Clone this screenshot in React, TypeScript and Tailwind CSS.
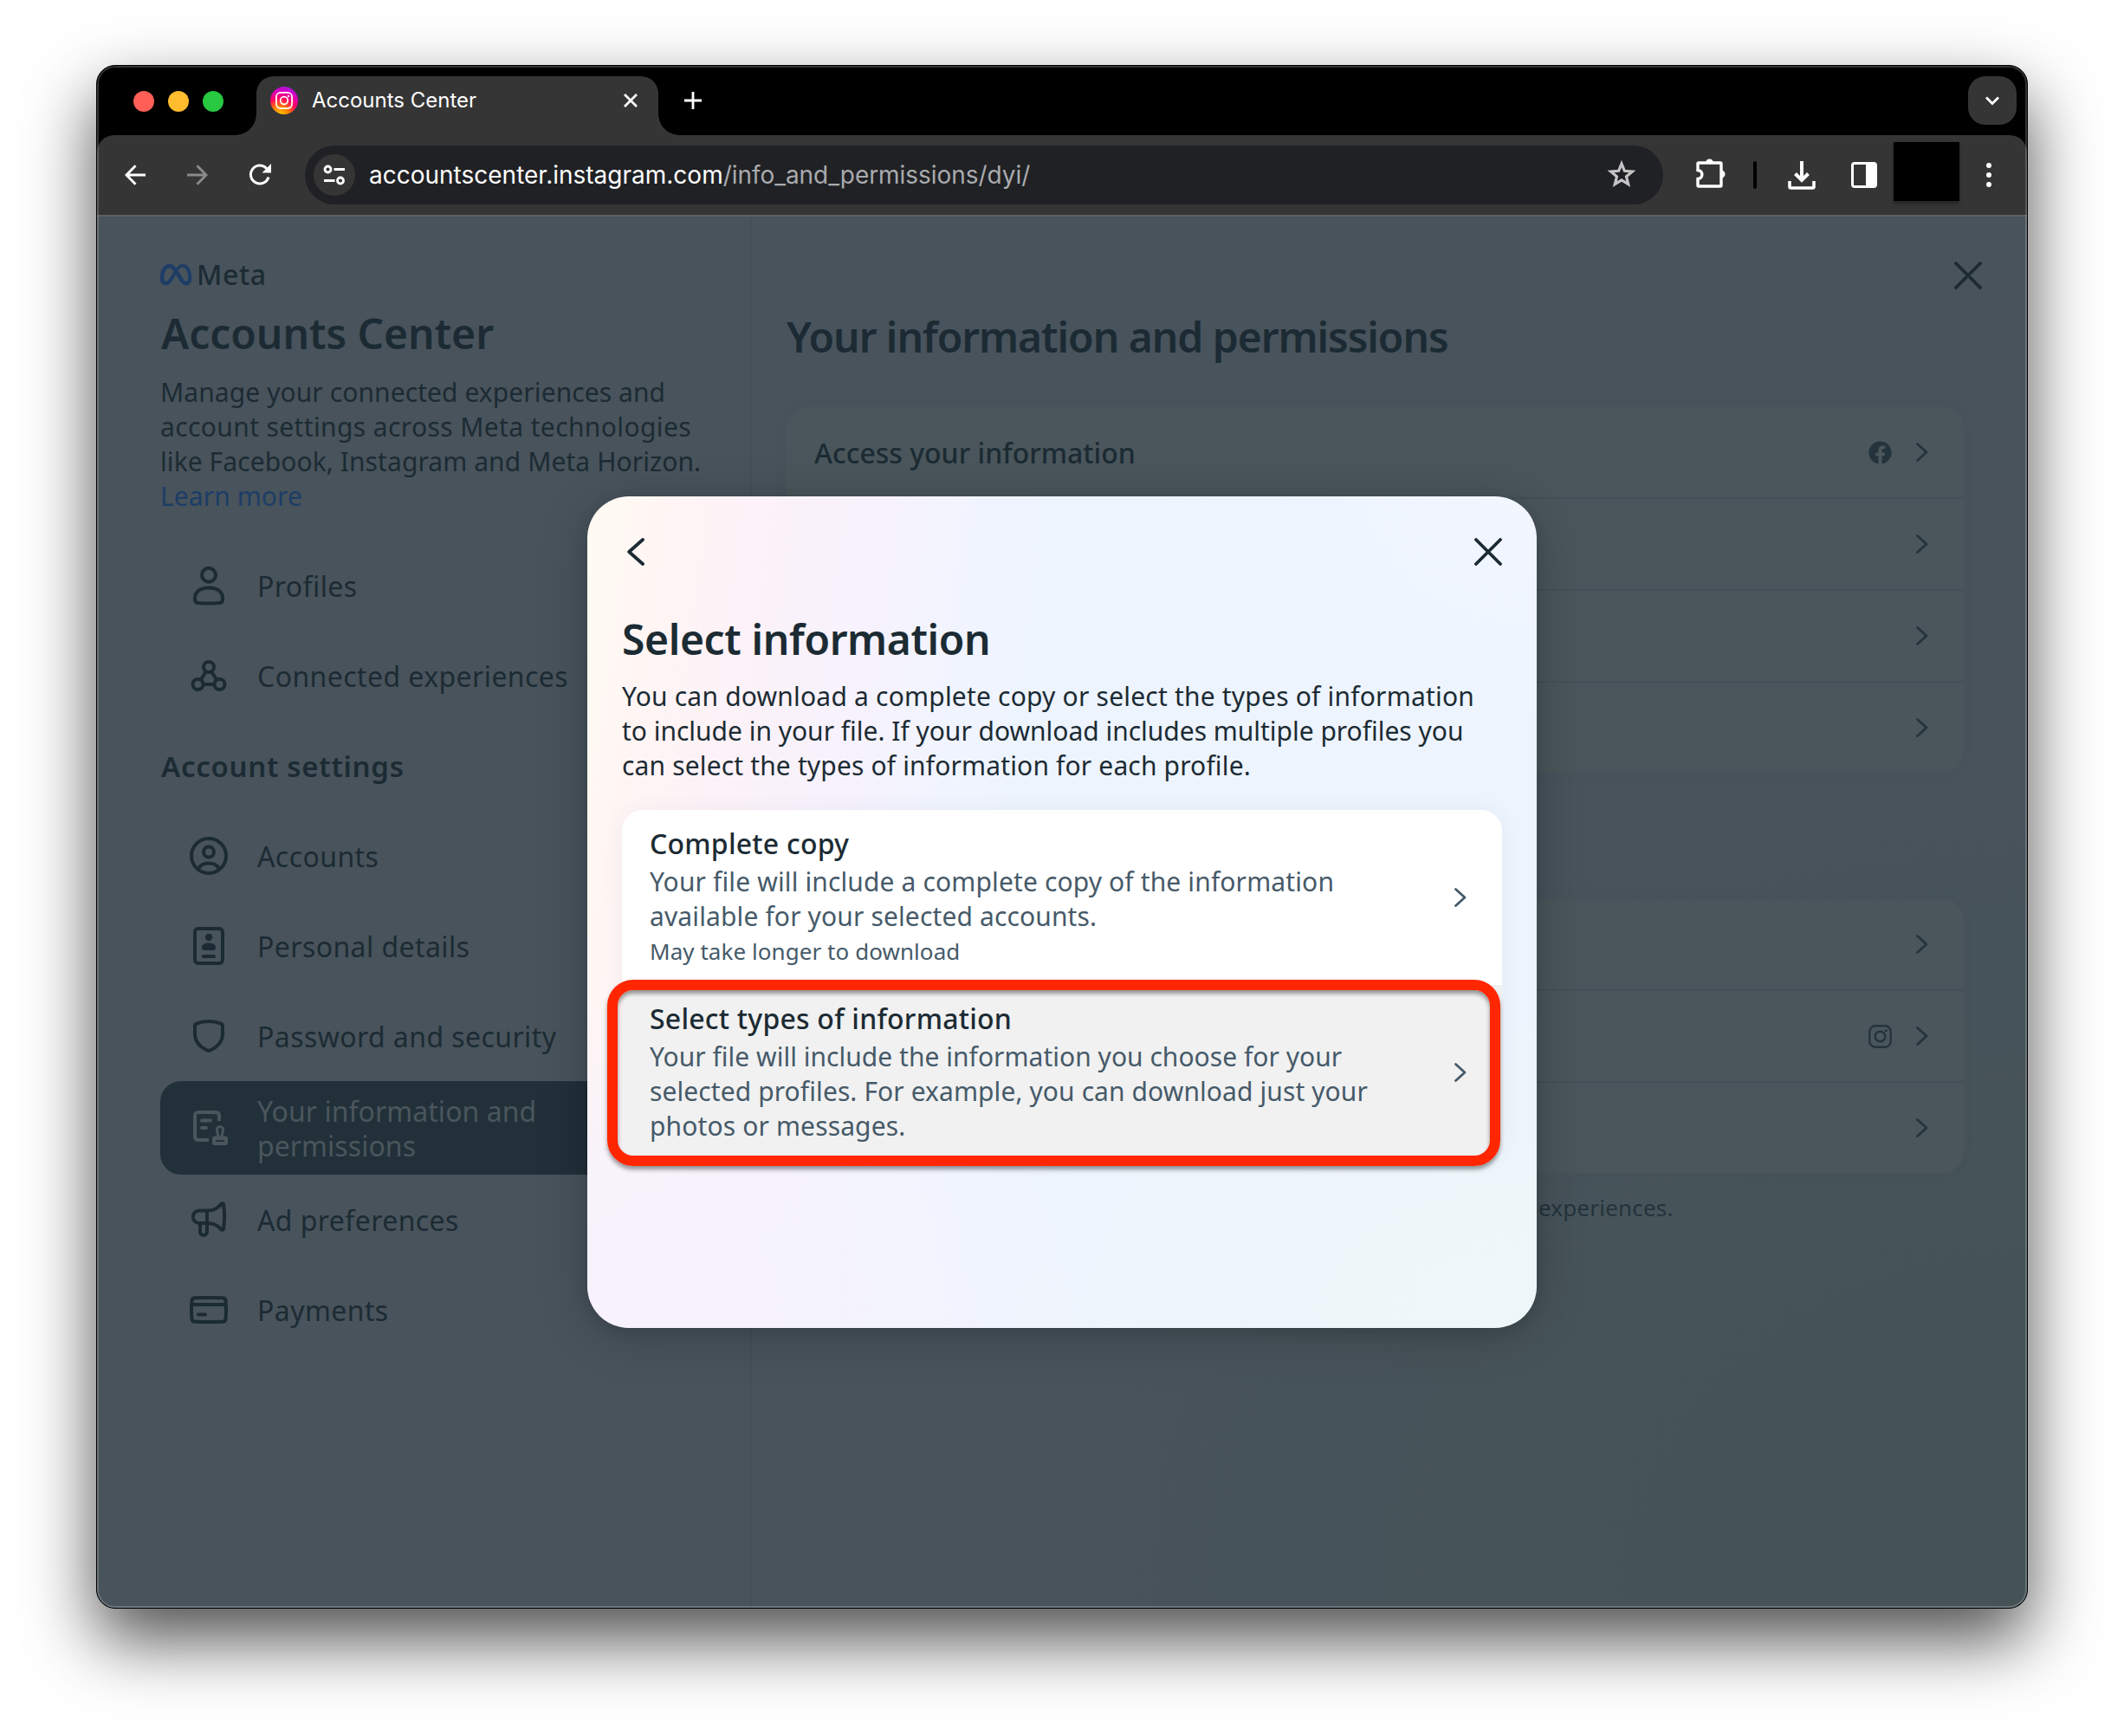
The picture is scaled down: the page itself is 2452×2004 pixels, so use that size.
import type { ReactNode } from 'react';
import { FaFacebook } from 'react-icons/fa';
import { SiMeta } from 'react-icons/si';

const stroke = {
  fill: 'none',
  stroke: 'currentColor',
  strokeWidth: 4,
  strokeLinecap: 'round' as const,
  strokeLinejoin: 'round' as const,
};

function NavSvg({ children }: { children: ReactNode }) {
  return (
    <svg viewBox="0 0 48 48" className="size-12 shrink-0" {...stroke}>
      {children}
    </svg>
  );
}

const ProfileIcon = () => (
  <NavSvg>
    <circle cx="24" cy="11.8" r="8" />
    <path d="M24 26.500c-9.500 0-16 4.500-16 12v1.500c0 2.500 1.200 3.800 3.600 4 8.200.7 16.600.7 24.800 0 2.400-.2 3.600-1.500 3.600-4v-1.500c0-7.500-6.500-12-16-12z" />
  </NavSvg>
);

const ConnectedIcon = () => (
  <NavSvg>
    <circle cx="24" cy="14" r="6" />
    <circle cx="11.500" cy="34" r="6" />
    <circle cx="36.500" cy="34" r="6" />
    <path d="M20.800 19.500 14.800 28.600M27.200 19.500l6 9.100M18 34h12" />
  </NavSvg>
);

const AccountsIcon = () => (
  <NavSvg>
    <circle cx="24" cy="24" r="20" />
    <circle cx="24" cy="19.500" r="6" />
    <path d="M12 39c2-4 6.500-6.500 12-6.500s10 2.500 12 6.500" />
  </NavSvg>
);

const DetailsIcon = () => (
  <NavSvg>
    <rect x="8" y="4" width="32" height="40" rx="4" />
    <circle cx="24" cy="14" r="4.200" fill="currentColor" stroke="none" />
    <path d="M24 20.500c-5 0-8 2.200-8 5.500 0 1.800 1.200 3 3 3h10c1.800 0 3-1.200 3-3 0-3.300-3-5.500-8-5.500z" fill="currentColor" stroke="none" />
    <path d="M18 36h12" />
  </NavSvg>
);

const ShieldIcon = () => (
  <NavSvg>
    <path d="M24 7c-5 0-9.500.8-14 2.600-1.400.6-2 1.500-2 3V21c0 9.500 5.500 15.500 14.600 19.600.9.500 1.900.5 2.800 0C34.500 36.500 40 30.500 40 21v-8.400c0-1.500-.6-2.400-2-3C33.500 7.800 29 7 24 7z" />
  </NavSvg>
);

const PermissionsIcon = () => (
  <NavSvg>
    <path d="M24 38H12c-2.500 0-4-1.500-4-4V10c0-2.500 1.500-4 4-4h20c2.500 0 4 1.500 4 4v6" strokeLinecap="butt" />
    <path d="M16 15.500h10M16 24h5" />
    <path d="M35 35c0-4-1.600-5.500-1.600-8.800a3.600 3.800 0 0 1 7.200 0c0 3.300-1.600 4.800-1.600 8.800" strokeWidth="3" />
    <path d="M31 33.500h12a3 3 0 0 1 3 3V42a2 2 0 0 1-2 2H30a2 2 0 0 1-2-2v-5.500a3 3 0 0 1 3-3zM32 38v2h10v-2z" fill="currentColor" fillRule="evenodd" stroke="none" />
  </NavSvg>
);

const MegaphoneIcon = () => (
  <NavSvg>
    <path d="M13 13.500h10c7.500 0 11.500-2.800 15.300-7.600.9-1.200 2.600-.8 2.800.6 1.200 8.600 1.200 19.400 0 28-.2 1.400-1.900 1.800-2.800.6-3.800-4.300-7.800-7.100-15.300-7.100H13a7.200 7.200 0 0 1 0-14.500z" />
    <path d="M22 14v24a4 4 0 0 1-8 0V28.500" />
  </NavSvg>
);

const CardIcon = () => (
  <NavSvg>
    <path d="M8 10.200c10.700-.4 21.300-.4 32 0 2.300.1 3.500 1.400 3.600 3.600.5 6.800.5 13.600 0 20.400-.1 2.200-1.300 3.500-3.600 3.600-10.700.4-21.300.4-32 0-2.300-.1-3.500-1.400-3.600-3.600-.5-6.800-.5-13.600 0-20.400.1-2.200 1.300-3.500 3.600-3.600zM4.500 18h39M12 29.500h8" />
  </NavSvg>
);

function Chevron() {
  return (
    <svg viewBox="0 0 16 24" className="h-6 w-4 shrink-0" fill="none" stroke="currentColor" strokeWidth="2.800" strokeLinecap="round" strokeLinejoin="round">
      <path d="M2.500 2.500 13 12 2.500 21.500" />
    </svg>
  );
}

function CloseIcon() {
  return (
    <svg viewBox="0 0 32 32" className="size-8" fill="none" stroke="currentColor" strokeWidth="3.800" strokeLinecap="round">
      <path d="M2 2l28 28M30 2 2 30" />
    </svg>
  );
}

function InstagramOutline({ className }: { className: string }) {
  return (
    <svg viewBox="0 0 26 26" className={className} fill="none" stroke="currentColor" strokeWidth="2.300">
      <rect x="1.200" y="1.200" width="23.600" height="23.600" rx="6.500" />
      <circle cx="13" cy="13" r="5.600" />
      <circle cx="19.600" cy="6.500" r="1.500" fill="currentColor" stroke="none" />
    </svg>
  );
}

function TabStrip() {
  return (
    <div className="flex h-20 items-start bg-black pt-3">
      <div className="flex h-[58px] w-[160px] items-center gap-4 pl-[42px]">
        <span className="size-6 shrink-0 rounded-full bg-[#ff5f57]" />
        <span className="size-6 shrink-0 rounded-full bg-[#febc2e]" />
        <span className="size-6 shrink-0 rounded-full bg-[#28c840]" />
      </div>
      <div className="size-6 self-end bg-[radial-gradient(circle_at_0_0,transparent_23.500px,#353535_24px)]" />
      <div className="flex h-[68px] w-[464px] items-start rounded-t-[20px] bg-[#353535] pt-3 pl-4">
        <span className="flex size-8 items-center justify-center rounded-full bg-[radial-gradient(circle_at_35%_105%,#ffd600_0%,#ff7a00_28%,#ff0069_52%,#d300c5_75%,#7638fa_100%)] text-white">
          <InstagramOutline className="size-[20px]" />
        </span>
        <span className="mt-0.5 ml-4 w-[360px] font-[Inter] text-[24px] leading-7 text-white">Accounts Center</span>
        <svg viewBox="0 0 16 16" className="mt-2 size-4" stroke="#fff" strokeWidth="2.800" strokeLinecap="butt">
          <path d="M1 1l14 14M15 1 1 15" />
        </svg>
      </div>
      <div className="size-6 self-end bg-[radial-gradient(circle_at_100%_0,transparent_23.500px,#353535_24px)]" />
      <svg viewBox="0 0 20 20" className="mt-[18px] ml-[6px] size-5" stroke="#fff" strokeWidth="2.800">
        <path d="M10 0v20M0 10h20" />
      </svg>
      <div className="mr-3 ml-auto flex h-14 w-14 items-center justify-center rounded-[20px] bg-[#353535]">
        <svg viewBox="0 0 16 10" className="h-[11px] w-4" fill="none" stroke="#fff" strokeWidth="2.800">
          <path d="M1 1l7 7 7-7" />
        </svg>
      </div>
    </div>
  );
}

function Toolbar() {
  return (
    <div className="bg-black">
      <div className="flex h-[94px] items-center rounded-t-[20px] border-b-2 border-[#645f5e] bg-[#353535] text-white">
        <svg viewBox="0 0 24 24" className="ml-8 size-6" fill="none" stroke="currentColor" strokeWidth="2.900">
          <path d="M24 12H2.500M12.500 1.200 2 12l10.500 10.800" />
        </svg>
        <svg viewBox="0 0 24 24" className="ml-[48px] size-6 text-[#8a8a8c]" fill="none" stroke="currentColor" strokeWidth="2.900">
          <path d="M0 12h21.500M11.500 1.200 22 12 11.500 22.800" />
        </svg>
        <svg viewBox="0 0 26 26" className="ml-[47px] size-[26px]" fill="none" stroke="currentColor" strokeWidth="3">
          <path d="M23 15.500A10.500 10.500 0 1 1 20.500 5.200L24 8.700" />
          <path d="M26 0v10.500H15.500z" fill="currentColor" stroke="none" />
        </svg>
        <div className="ml-[39px] flex h-[68px] w-[1568px] items-center rounded-full bg-[#202124] pl-[10px]">
          <span className="flex size-12 items-center justify-center rounded-full bg-[#353535]">
            <svg viewBox="0 0 26 24" className="h-6 w-[26px]" fill="none" stroke="currentColor" strokeWidth="2.800">
              <circle cx="5.500" cy="5.500" r="3.500" />
              <circle cx="20" cy="18.500" r="3.500" />
              <path d="M12.500 5.500H25M1 18.500h12.500" />
            </svg>
          </span>
          <span className="ml-4 flex font-[Inter] text-[28px] leading-9">
            <span className="text-white">accountscenter.instagram.com</span>
            <span className="tracking-[-0.05px] text-[#a9abae]">/info_and_permissions/dyi/</span>
          </span>
          <svg viewBox="0 0 34 34" className="mr-[31px] mb-0.5 ml-auto size-[34px]" fill="none" stroke="#c4c4c4" strokeWidth="3.200" strokeLinejoin="miter">
            <path d="M17 5l3.400 8.300 9 .7-6.900 5.800 2.200 8.700-7.700-4.700-7.700 4.700 2.200-8.700L4.600 14l9-.7z" />
          </svg>
        </div>
        <svg viewBox="0 0 36 36" className="mb-1.5 ml-[36px] size-9" fill="none" stroke="currentColor" strokeWidth="3.400">
          <path d="M5 7h25a1 1 0 0 1 1 1v25a1 1 0 0 1-1 1H5a1 1 0 0 1-1-1v-7.500c6.500-.5 6.500-9.500 0-10V8a1 1 0 0 1 1-1z" />
          <path d="M13 7a4.500 4.500 0 0 1 9 0zM31 15.500a4.500 4.500 0 0 1 0 9z" fill="currentColor" stroke="none" />
        </svg>
        <span className="ml-[32px] h-8 w-1 rounded-sm bg-black" />
        <svg viewBox="0 0 32 34" className="ml-[36px] h-[34px] w-8" fill="none" stroke="currentColor" strokeWidth="4">
          <path d="M16 1v21M8.500 15.500l7.500 7.500 7.500-7.500" />
          <path d="M2 24v6.500a1.500 1.500 0 0 0 1.500 1.500h25a1.500 1.500 0 0 0 1.500-1.500V24" strokeWidth="3.600" />
        </svg>
        <span className="ml-[41px] flex h-[30px] w-[30px] justify-end overflow-hidden rounded-[4px] border-[3px] border-white">
          <span className="w-[10px] bg-white" />
        </span>
        <span className="mb-2 ml-[19px] h-[68px] w-[76px] bg-black shadow-[0_3px_4px_rgba(0,0,0,.35)]" />
        <span className="ml-[31px] flex flex-col gap-[5px]">
          <span className="size-[6px] rounded-full bg-white" />
          <span className="size-[6px] rounded-full bg-white" />
          <span className="size-[6px] rounded-full bg-white" />
        </span>
      </div>
    </div>
  );
}

function NavRow({ icon, label }: { icon: ReactNode; label: string }) {
  return (
    <div className="flex h-[104px] items-center gap-8 pl-8 text-[32px] leading-10 font-[450] tracking-[0.42px] whitespace-nowrap">
      {icon}
      <span className="pt-0.5">{label}</span>
    </div>
  );
}

function Sidebar() {
  return (
    <div className="h-full w-[756px] shrink-0 border-r-2 border-[#444f58] pt-[49px] pr-6 pl-[73px]">
      <div className="flex h-9 items-center gap-[6px] text-[32px] leading-9 font-medium tracking-[0.6px]">
        <SiMeta className="size-9 overflow-visible text-[#1d3d66]" stroke="currentColor" strokeWidth="0.500" />
        <span>Meta</span>
      </div>
      <h1 className="mt-[22px] pl-px text-[48px] leading-[56px] font-semibold tracking-[-0.05px]">Accounts Center</h1>
      <p className="mt-5 text-[30px] leading-10 tracking-[0.08px] whitespace-nowrap">
        Manage your connected experiences and
        <br />
        <span className="tracking-[0.38px]">account settings across Meta technologies</span>
        <br />
        like Facebook, Instagram and Meta Horizon.
        <br />
        <span className="text-[#1d3d66]">Learn more</span>
      </p>
      <nav className="mt-[31px]">
        <NavRow icon={<ProfileIcon />} label="Profiles" />
        <NavRow icon={<ConnectedIcon />} label="Connected experiences" />
        <h2 className="flex h-[104px] items-center pt-0.5 pl-px text-[33px] leading-10 font-semibold tracking-[0.7px]">Account settings</h2>
        <NavRow icon={<AccountsIcon />} label="Accounts" />
        <NavRow icon={<DetailsIcon />} label="Personal details" />
        <NavRow icon={<ShieldIcon />} label="Password and security" />
        <div className="flex h-[108px] items-center gap-8 rounded-[24px] bg-[#22303a] pl-8 text-[32px] leading-10 font-[450] tracking-[0.05px] text-[#4a565c]">
          <PermissionsIcon />
          <span className="pt-0.5">
            Your information and
            <br />
            permissions
          </span>
        </div>
        <NavRow icon={<MegaphoneIcon />} label="Ad preferences" />
        <NavRow icon={<CardIcon />} label="Payments" />
      </nav>
    </div>
  );
}

function SettingsRow({ label, icon }: { label?: string; icon?: ReactNode }) {
  return (
    <div className="box-content h-[104px]">
      <div className="flex h-full items-center pr-[40px] pl-8 text-[#24333c]">
        <span className="flex-1 pt-0.5 text-[32px] font-medium text-[#1c2b33]">{label}</span>
        {icon}
        <span className="ml-[27px] flex">
          <Chevron />
        </span>
      </div>
    </div>
  );
}

const cardClass =
  'divide-y-2 divide-[#444f59] rounded-[24px] bg-[#4a565b] shadow-[0_0_24px_rgba(0,0,0,.02)]';

function MainPanel() {
  return (
    <div className="flex-1 pl-[40px]">
      <div className="flex h-[98px] items-end justify-end pr-[52px]">
        <span className="mb-[14px]">
          <CloseIcon />
        </span>
      </div>
      <h1 className="mt-[13px] text-[48px] leading-[56px] font-semibold tracking-[-1.05px]">Your information and permissions</h1>
      <div className={`mt-[53px] w-[1359px] ${cardClass}`}>
        <SettingsRow label="Access your information" icon={<FaFacebook className="size-[27px]" />} />
        <SettingsRow />
        <SettingsRow />
        <SettingsRow />
      </div>
      <div className={`mt-[146px] w-[1359px] ${cardClass}`}>
        <SettingsRow />
        <SettingsRow icon={<InstagramOutline className="size-[27px]" />} />
        <SettingsRow />
      </div>
      <p className="mt-[20px] pl-[868px] text-[26px] leading-10 tracking-[0.2px] text-[#24333c]">experiences.</p>
    </div>
  );
}

function Option({ title, text, note, selected }: { title: string; text: ReactNode; note?: string; selected?: boolean }) {
  return (
    <div
      className={
        selected
          ? 'flex h-[202px] items-center rounded-b-[24px] bg-[#f1f1f1] pr-[40px] pl-8'
          : 'flex h-[202px] items-center rounded-t-[24px] bg-white pr-[40px] pl-8'
      }
    >
      <div className="h-full flex-1 pt-[19px]">
        <div className="text-[32px] leading-10 font-medium tracking-[0.22px] text-[#1c2b33]">{title}</div>
        <div className="mt-1 text-[30px] leading-10 tracking-[0.13px] whitespace-nowrap text-[#465a69]">{text}</div>
        {note && <div className="mt-0.5 text-[26px] leading-9 tracking-[0.06px] text-[#465a69]">{note}</div>}
      </div>
      <span className="text-[#465a69]">
        <Chevron />
      </span>
    </div>
  );
}

function Dialog() {
  return (
    <div className="absolute top-[323px] left-[566px] h-[960px] w-[1096px] rounded-[48px] bg-[radial-gradient(ellipse_60%_45%_at_100%_100%,#eef7f8_0%,rgba(238,247,248,0)_100%),radial-gradient(ellipse_40%_35%_at_100%_0%,#f1f6ff_0%,rgba(241,246,255,0)_100%),radial-gradient(ellipse_60%_40%_at_0%_100%,#f7f2fd_0%,#f5f3fdcc_40%,rgba(241,243,254,0)_100%),linear-gradient(98deg,#fffaf3_2%,#fff5f4_8%,#fdf2f7_15%,#f7f2fd_27%,#f1f4fe_36%,#edf4fe_46%,#edf4fe_100%)] px-10 pt-12 shadow-[0_8px_60px_rgba(0,0,0,.2),0_4px_16px_rgba(0,0,0,.1)]">
      <div className="flex h-8 items-center justify-between pl-[6px] text-[#1c2b33]">
        <svg viewBox="0 0 20 32" className="h-8 w-5" fill="none" stroke="currentColor" strokeWidth="3.800" strokeLinecap="round" strokeLinejoin="round">
          <path d="M18 2 2.200 16 18 30" />
        </svg>
        <CloseIcon />
      </div>
      <h2 className="mt-[57px] text-[48px] leading-[56px] font-semibold tracking-[-0.38px] text-[#1c2b33]">Select information</h2>
      <p className="mt-[18px] text-[30px] leading-10 tracking-[0.2px] whitespace-nowrap text-[#1c2b33]">
        You can download a complete copy or select the types of information
        <br />
        <span className="tracking-[-0.02px]">to include in your file. If your download includes multiple profiles you</span>
        <br />
        <span className="tracking-[0.15px]">can select the types of information for each profile.</span>
      </p>
      <div className="relative mt-[31px] rounded-[24px] shadow-[0_0_24px_rgba(50,60,110,.06)]">
        <Option
          title="Complete copy"
          text={
            <>
              Your file will include a complete copy of the information
              <br />
              available for your selected accounts.
            </>
          }
          note="May take longer to download"
        />
        <Option
          selected
          title="Select types of information"
          text={
            <>
              <span className="tracking-[0.02px]">Your file will include the information you choose for your</span>
              <br />
              <span className="tracking-[0.09px]">selected profiles. For example, you can download just your</span>
              <br />
              photos or messages.
            </>
          }
        />
        <div className="absolute top-[196px] -left-[17px] h-[215px] w-[1031px] rounded-[30px] border-[12px] border-[#ff2600] shadow-[0_4px_5px_rgba(0,0,0,.4),inset_0_4px_5px_rgba(0,0,0,.4)]" />
      </div>
    </div>
  );
}

export default function App() {
  return (
    <div className="h-[2004px] w-full bg-white pt-[75px] pl-[111px] font-['Noto_Sans',sans-serif]">
      <div className="relative h-[1782px] w-[2230px] overflow-hidden rounded-[22px] border border-black bg-black shadow-[0_36px_80px_rgba(0,0,0,.69)]">
        <TabStrip />
        <Toolbar />
        <div className="relative flex h-[1606px] overflow-hidden bg-[radial-gradient(ellipse_50%_60%_at_100%_100%,#455357_0%,#455357_40%,#48535c_100%)] text-[#1c2b33]">
          <Sidebar />
          <MainPanel />
          <Dialog />
        </div>
        <div className="pointer-events-none absolute inset-0 rounded-[21px] border-2 border-white/20" />
      </div>
    </div>
  );
}
